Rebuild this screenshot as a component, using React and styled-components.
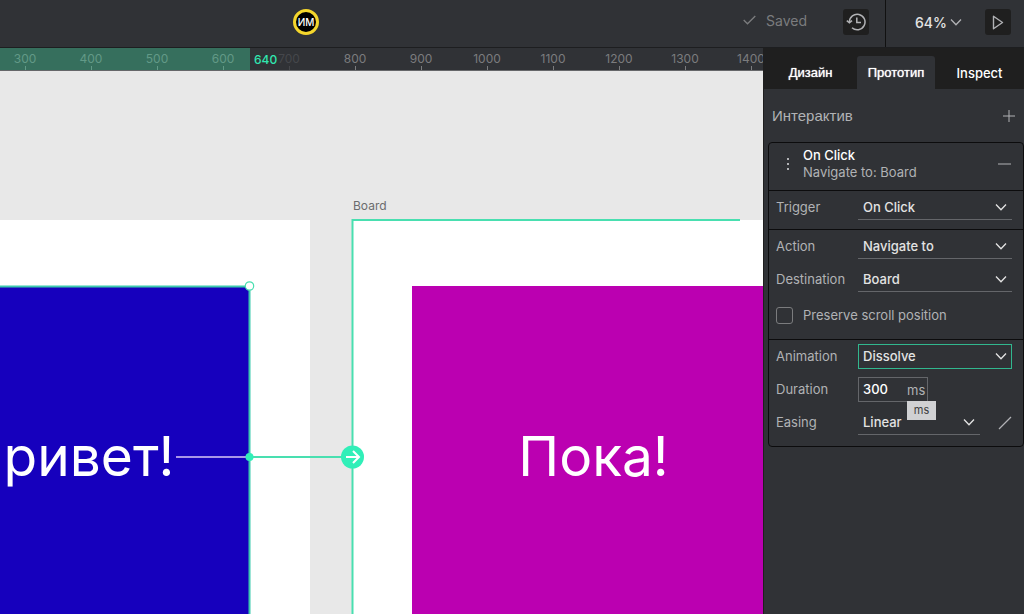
import React from 'react';
import styled, { createGlobalStyle } from 'styled-components';

const GlobalStyle = createGlobalStyle`
  * {
    box-sizing: border-box;
  }

  body {
    margin: 0;
    background: #e8e8e8;
    font-family: Inter, "Liberation Sans", sans-serif;
    font-size: 13px;
  }

  button, input, select {
    font: inherit;
    color: inherit;
  }
`;

const Page = styled.div`
  display: flex;
  flex-direction: column;
  height: 100vh;
  overflow: hidden;
`;

/** Top bar */
const Header = styled.header`
  display: flex;
  flex: none;
  height: 48px;
  background: #303236;
  border-bottom: 1px solid #1d1e20;
`;

const HeaderMain = styled.div`
  display: flex;
  flex: 1;
  justify-content: space-between;
  padding: 9px 16px 0 293px;
`;

const HeaderSide = styled.div`
  display: flex;
  justify-content: space-between;
  width: 139px;
  padding: 9px 13px 0 29px;
  border-left: 1px solid #111;
`;

const Avatar = styled.div`
  display: flex;
  align-items: center;
  justify-content: center;
  width: 26px;
  height: 26px;
  border: 3px solid #f4d62c;
  border-radius: 50%;
  background: #000;
  color: #fff;
  font-size: 10px;
  font-weight: 500;
`;

const HeaderGroup = styled.div`
  display: flex;
  align-items: center;
  height: 26px;
`;

const Saved = styled.span`
  display: flex;
  align-items: center;
  gap: 10px;
  margin: 0 36px 4px 0;
  color: #7b7c7e;
  font-size: 14px;
`;

const IconButton = styled.button`
  display: flex;
  align-items: center;
  justify-content: center;
  width: 26px;
  height: 26px;
  padding: 0;
  border: 0;
  border-radius: 3px;
  background: ${(props) => (props.$plain ? 'transparent' : '#1f1f1f')};
  color: #b1b2b5;
`;

const Zoom = styled.button`
  display: flex;
  align-items: center;
  gap: 3px;
  height: 26px;
  padding: 0;
  border: 0;
  background: none;
  color: #e3e3e3;
  font-size: 14px;
  font-weight: 500;

  svg {
    color: #b1b2b5;
  }
`;

const Main = styled.main`
  display: flex;
  flex: 1;
  min-height: 0;
`;

const Viewport = styled.section`
  display: flex;
  flex: 1;
  flex-direction: column;
  min-width: 0;
`;

/** Ruler over the canvas */
const Ruler = styled.div`
  position: relative;
  display: flex;
  flex: none;
  height: 23px;
  padding-left: 58px;
  overflow: hidden;
  background: #303236;
  border-bottom: 1px solid #66676a;
`;

const Mark = styled.span`
  position: relative;
  flex: none;
  width: 66px;
  padding-top: 2px;
  color: ${(props) => (props.$dim ? '#45474b' : '#7b7c7e')};
  font-size: 12px;
  line-height: 17px;
  text-align: center;

  &:first-of-type {
    margin-left: -66px;
  }

  &::after {
    content: "";
    position: absolute;
    bottom: 0;
    left: 33px;
    width: 1px;
    height: 4px;
    background: currentColor;
  }
`;

const RulerRange = styled.div`
  position: absolute;
  top: 0;
  left: 0;
  width: 250px;
  height: 23px;
  background: rgba(65, 195, 148, 0.42);
`;

const RulerValue = styled.span`
  position: absolute;
  top: 3px;
  left: 254px;
  color: #31e6b0;
  font-size: 12px;
  font-weight: 500;
  line-height: 17px;
`;

/** Free canvas with the boards */
const Canvas = styled.div`
  position: relative;
  flex: 1;
  overflow: hidden;
  background: #e8e8e8;
`;

const Board = styled.div`
  position: absolute;
  top: 149px;
  left: ${(props) => props.$x}px;
  display: flex;
  align-items: center;
  justify-content: center;
  width: 483px;
  height: 474px;
  background: #fff;
`;

const BoardName = styled.span`
  position: absolute;
  top: -24px;
  left: 1px;
  color: #6b6c6e;
  font-size: 12px;
  line-height: 20px;
`;

const Shape = styled.div`
  display: flex;
  align-items: center;
  justify-content: center;
  width: 363px;
  height: 342px;
  padding-bottom: 2px;
  background: ${(props) => props.$color};
  color: #fff;
  font-size: 55px;
`;

const Overlay = styled.svg`
  position: absolute;
  top: 0;
  left: 0;
  width: 100%;
  height: 100%;
`;

/** Right sidebar */
const Sidebar = styled.aside`
  flex: none;
  width: 261px;
  background: #303236;
  border-left: 1px solid #1f1f1f;
`;

const Tabs = styled.div`
  display: grid;
  grid-template-columns: 93px 78px 1fr;
  height: 41px;
  padding-top: 8px;
  background: #1f1f1f;
`;

const Tab = styled.button`
  padding: 0;
  border: 0;
  border-radius: 3px 3px 0 0;
  background: ${(props) => (props.$active ? '#303236' : 'transparent')};
  color: #fff;
  font-family: ${(props) => (props.$latin ? 'Inter' : '"Liberation Sans"')}, sans-serif;
  font-weight: ${(props) => (props.$latin ? 500 : 400)};
  text-shadow: ${(props) => (props.$latin ? 'none' : '0 0 1px #fff')};
`;

const TitleRow = styled.div`
  display: flex;
  align-items: center;
  justify-content: space-between;
  height: 53px;
  padding: 0 2px 0 8px;
`;

const Title = styled.h2`
  margin: 0;
  color: #b1b2b5;
  font-family: "Liberation Sans", sans-serif;
  font-size: 15px;
  font-weight: 400;
`;

const Card = styled.div`
  margin: 0 0 0 4px;
  border: 1px solid #0c0c0d;
  border-radius: 4px;
`;

const CardHead = styled.div`
  display: flex;
  align-items: center;
  height: 47px;
  padding: 0 12px 6px 15px;
`;

const CardTitle = styled.div`
  flex: 1;
  margin-left: 12px;
  color: #b1b2b5;
  line-height: 17px;

  strong {
    display: block;
    color: #fff;
    font-weight: 500;
  }
`;

const Section = styled.div`
  display: flex;
  flex-direction: column;
  gap: 8px;
  padding: 4px 11px 9px 7px;
  border-top: 1px solid #0c0c0d;

  &:last-child {
    padding-bottom: 11px;
  }
`;

const Row = styled.div`
  display: flex;
  align-items: center;
  height: 25px;
`;

const Label = styled.label`
  flex: none;
  width: 82px;
  padding-bottom: 2px;
  color: #b1b2b5;
`;

const SelectBox = styled.div`
  position: relative;
  flex: 1;
  height: 25px;
  color: #e3e3e3;

  svg {
    position: absolute;
    top: 8px;
    right: 5px;
    pointer-events: none;
  }
`;

const Select = styled.select`
  display: block;
  width: 100%;
  height: 25px;
  padding: ${(props) => (props.$focused ? '0 20px 2px 4px' : '0 20px 0 5px')};
  appearance: none;
  border-style: solid;
  border-color: ${(props) => (props.$focused ? '#31b78e' : '#64666a')};
  border-width: ${(props) => (props.$focused ? '1px' : '0 0 1px')};
  border-radius: 0;
  background: transparent;
  outline: 0;
  font-weight: 500;
`;

const CheckRow = styled.label`
  display: flex;
  align-items: center;
  gap: 10px;
  height: 30px;
  color: #b1b2b5;
`;

const Checkbox = styled.input`
  width: 17px;
  height: 17px;
  margin: 0;
  appearance: none;
  border: 1px solid #7b7c7e;
  border-radius: 3px;
`;

const NumberBox = styled.div`
  position: relative;
  display: flex;
  align-items: center;
  width: 70px;
  height: 25px;
  border: 1px solid #64666a;
  color: #b1b2b5;
`;

const NumberInput = styled.input`
  width: 48px;
  padding: 0 0 2px 4px;
  border: 0;
  background: none;
  color: #fff;
  font-weight: 500;
  outline: 0;
`;

const Tooltip = styled.span`
  position: absolute;
  top: 23px;
  left: 48px;
  z-index: 1;
  width: 29px;
  background: #d0d1d3;
  color: #3c3d40;
  font-size: 11px;
  line-height: 19px;
  text-align: center;
`;

const SmallButton = styled(IconButton)`
  width: 14px;
  margin-left: 18px;
`;

const Chevron = () => (
	<svg width="12" height="9" viewBox="0 0 12 9" fill="none" stroke="currentColor" strokeWidth="1.3">
		<path d="M1 1.5L6 6.8L11 1.5" />
	</svg>
);

const SelectField = ({ id, label, value, focused, children }) => (
	<Row>
		<Label htmlFor={id}>{label}</Label>
		<SelectBox>
			<Select id={id} defaultValue={value} $focused={focused}>
				<option>{value}</option>
			</Select>
			<Chevron />
		</SelectBox>
		{children}
	</Row>
);

const marks = [300, 400, 500, 600, 700, 800, 900, 1000, 1100, 1200, 1300, 1400];

const App = () => {
	return (
		<Page>
			<GlobalStyle />

			<Header>
				<HeaderMain>
					<Avatar>ИМ</Avatar>
					<HeaderGroup>
						<Saved>
							<svg width="13" height="10" viewBox="0 0 13 10" fill="none" stroke="currentColor" strokeWidth="1.3">
								<path d="M0.7 5L4.5 8.8L12.3 1" />
							</svg>
							Saved
						</Saved>
						<IconButton type="button" aria-label="History">
							<svg width="20" height="18" viewBox="0 0 20 18" fill="none" stroke="currentColor" strokeWidth="1.5">
								<path d="M3.4 9A7.8 7.8 0 1 1 6 14.8" />
								<path d="M0.8 7.6L3.4 9.8L6 7.6" />
								<path d="M10.8 4.6V9.5H15" />
							</svg>
						</IconButton>
					</HeaderGroup>
				</HeaderMain>
				<HeaderSide>
					<Zoom type="button">64% <Chevron /></Zoom>
					<IconButton type="button" aria-label="Play">
						<svg width="12" height="15" viewBox="0 0 12 15" fill="none" stroke="currentColor" strokeWidth="1.4" strokeLinejoin="round">
							<path d="M1.5 1.2L10.5 7.5L1.5 13.8Z" />
						</svg>
					</IconButton>
				</HeaderSide>
			</Header>

			<Main>
				<Viewport>
					<Ruler>
						{marks.map((v) => <Mark key={v} $dim={v === 700}>{v}</Mark>)}
						<RulerRange />
						<RulerValue>640</RulerValue>
					</Ruler>

					<Canvas>
						<Board $x={-173}>
							<Shape $color="#1600bd">Привет!</Shape>
						</Board>
						<Board $x={352}>
							<BoardName>Board</BoardName>
							<Shape $color="#bb00b1">Пока!</Shape>
						</Board>

						{/* 선택 영역과 연결선 */}
						<Overlay fill="none" stroke="#49dfb0" strokeWidth="2">
							<path d="M0 215.5H249.5V620" stroke="#3cc9ae" />
							<path d="M740 149H352.5V620" />
							<path d="M176 386H249" stroke="#a996e8" />
							<path d="M249 386H352" />
							<circle cx="249.5" cy="386" r="4" fill="#31efb8" stroke="none" />
							<circle cx="249.5" cy="215" r="4.2" fill="#fff" strokeWidth="1.2" />
							<circle cx="352.5" cy="386" r="11.5" fill="#31efb8" stroke="none" />
							<path d="M346 386H359M353 380L359 386L353 392" stroke="#fff" />
						</Overlay>
					</Canvas>
				</Viewport>

				<Sidebar>
					<Tabs>
						<Tab type="button">Дизайн</Tab>
						<Tab type="button" $active>Прототип</Tab>
						<Tab type="button" $latin>Inspect</Tab>
					</Tabs>

					<TitleRow>
						<Title>Интерактив</Title>
						<IconButton type="button" $plain aria-label="Add">
							<svg width="12" height="12" viewBox="0 0 12 12" stroke="currentColor">
								<path d="M6 0V12M0 6H12" />
							</svg>
						</IconButton>
					</TitleRow>

					<Card>
						<CardHead>
							<svg width="7" height="14" viewBox="0 0 7 14" fill="#b1b2b5">
								<rect x="3" y="1" width="2" height="2" />
								<rect x="3" y="6" width="2" height="2" />
								<rect x="3" y="11" width="2" height="2" />
							</svg>
							<CardTitle>
								<strong>On Click</strong>
								Navigate to: Board
							</CardTitle>
							<SmallButton type="button" $plain aria-label="Remove">
								<svg width="13" height="2" viewBox="0 0 13 2"><path d="M0 1H13" stroke="currentColor" /></svg>
							</SmallButton>
						</CardHead>

						<Section>
							<SelectField id="trigger" label="Trigger" value="On Click" />
						</Section>

						<Section>
							<SelectField id="action" label="Action" value="Navigate to" />
							<SelectField id="destination" label="Destination" value="Board" />
							<CheckRow>
								<Checkbox type="checkbox" />
								Preserve scroll position
							</CheckRow>
						</Section>

						<Section>
							<SelectField id="animation" label="Animation" value="Dissolve" focused />
							<Row>
								<Label htmlFor="duration">Duration</Label>
								<NumberBox>
									<NumberInput id="duration" type="text" defaultValue="300" />
									ms
									<Tooltip>ms</Tooltip>
								</NumberBox>
							</Row>
							<SelectField id="easing" label="Easing" value="Linear">
								<SmallButton type="button" $plain aria-label="Easing curve">
									<svg width="14" height="14" viewBox="0 0 14 14"><path d="M1 13L13 1" stroke="currentColor" strokeWidth="1.3" /></svg>
								</SmallButton>
							</SelectField>
						</Section>
					</Card>
				</Sidebar>
			</Main>
		</Page>
	);
};

export default App;
